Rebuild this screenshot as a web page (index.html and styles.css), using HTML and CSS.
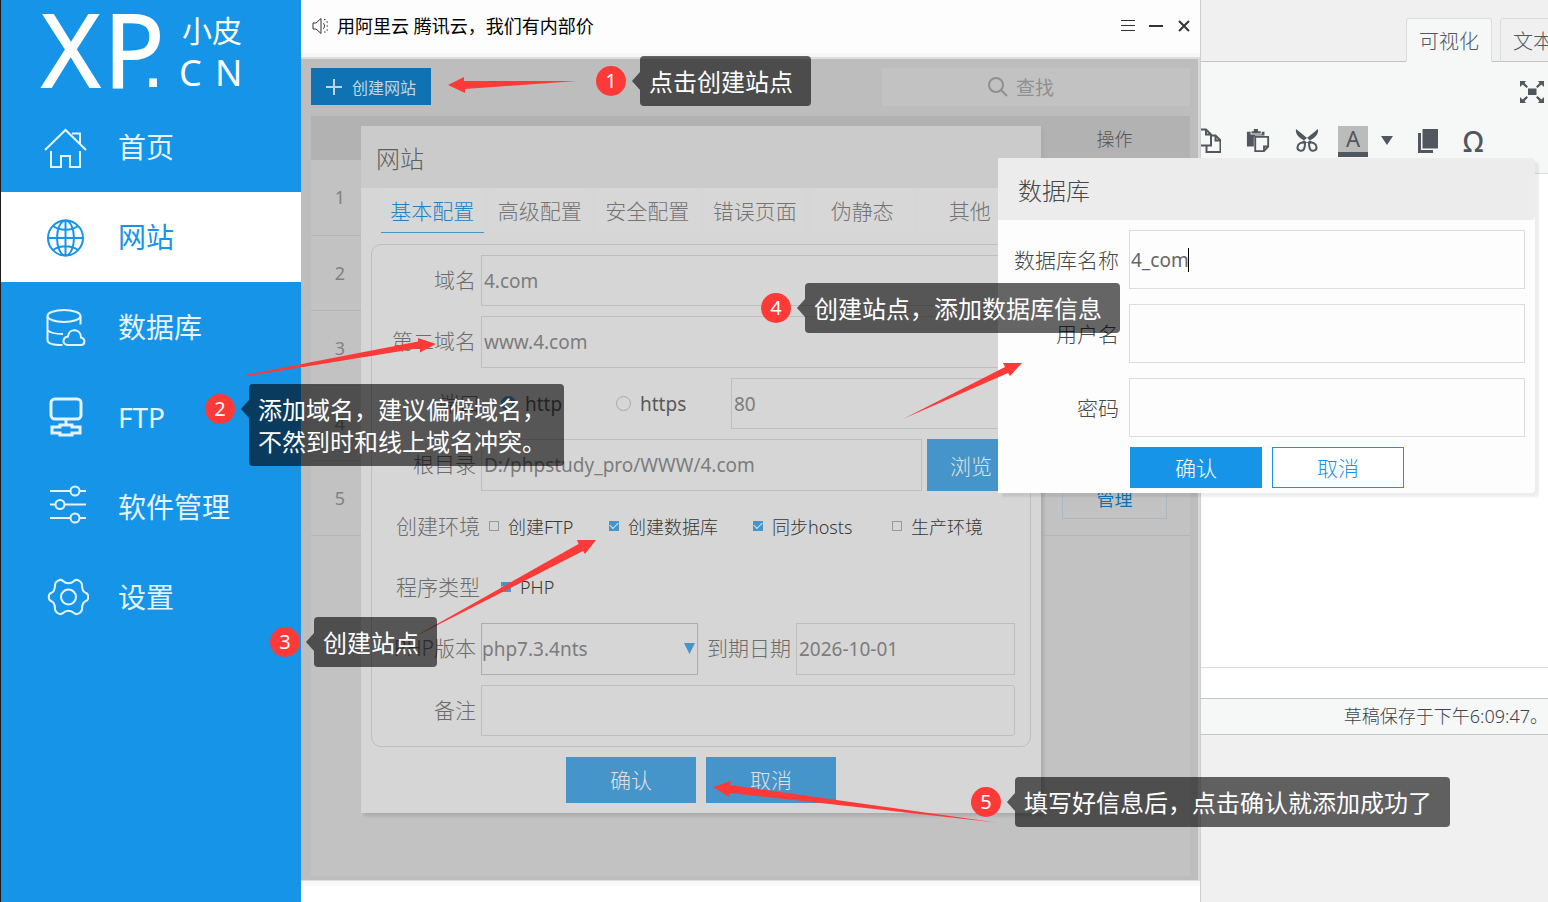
FILE: index.html
```html
<!DOCTYPE html>
<html lang="zh-CN">
<head>
<meta charset="utf-8">
<title>小皮 - 创建网站</title>
<link rel="stylesheet" href="styles.css">
</head>
<body>
<div class="desktop">
  <aside class="sidebar">
    <svg class="logo" viewBox="0 0 300 102" role="img" aria-label="XP.CN 小皮">
      <text class="logo-big" x="41 103" y="87">XP<tspan class="logo-dot" x="141" y="87">.</tspan></text>
      <text class="logo-cn" x="181" y="42">小皮</text>
      <text class="logo-en" x="178 214" y="86">CN</text>
    </svg>
    <nav class="nav">
      <a class="nav-item" href="#home">
        <svg class="nav-icon" viewBox="0 0 46 46"><path d="M2 26 22.500 6 43 26M8 27v16h10V32h9v11h10V27M29 9.500h8v10"/></svg>
        <span>首页</span>
      </a>
      <a class="nav-item active" href="#site">
        <svg class="nav-icon" viewBox="0 0 46 46"><circle cx="22.500" cy="24" r="17.500"/><ellipse cx="22.500" cy="24" rx="8.500" ry="17.500"/><path d="M22.500 6.500v35M5 24h35M10 12c7 5 18 5 25 0M10 36c7-5 18-5 25 0"/></svg>
        <span>网站</span>
      </a>
      <a class="nav-item" href="#db">
        <svg class="nav-icon" viewBox="0 0 46 46"><ellipse cx="21" cy="12" rx="16.500" ry="6"/><path d="M37.500 12v8.500M4.500 12v24c0 3 5 5 15 5M4.500 26c2 2.500 7 4 15.500 4M25 41h13c4 0 5-6 0-7.500 0-9-12-10-13-1-6 1-6 8 0 8.500z"/></svg>
        <span>数据库</span>
      </a>
      <a class="nav-item" href="#ftp">
        <svg class="nav-icon thick" viewBox="0 0 46 46"><rect x="8" y="5" width="30" height="20" rx="4"/><path d="M23 25v6M17 31h12v2h8v6h-8v2H17v-2H9v-6h8z"/></svg>
        <span>FTP</span>
      </a>
      <a class="nav-item" href="#soft">
        <svg class="nav-icon" viewBox="0 0 46 46"><path d="M7 7h20.500M36.500 7H43M7 20.500h5.500M21.500 20.500H43M7 34h20.500M36.500 34H43"/><circle cx="32" cy="7" r="4.500"/><circle cx="17" cy="20.500" r="4.500"/><circle cx="32" cy="34" r="4.500"/></svg>
        <span>软件管理</span>
      </a>
      <a class="nav-item" href="#settings">
        <svg class="nav-icon" viewBox="0 0 46 46"><path d="M20 7c3 3 8 3 11 0 3-3 8 1 8 4 0 5 1 7 4 8 3 1 3 7 0 8-3 1-4 4-4 8 0 3-5 7-8 4-3-3-8-3-11 0-3 3-8-1-8-4 0-4-1-7-4-8-3-1-3-7 0-8 3-1 4-3 4-8 0-3 5-7 8-4z"/><circle cx="25.500" cy="23" r="7.500"/></svg>
        <span>设置</span>
      </a>
    </nav>
  </aside>

  <main class="app">
    <header class="titlebar">
      <svg class="speaker" viewBox="0 0 18 18"><path d="M2 6h3l5-4.500v15L5 12H2zM12 6c2 1.500 2 4.500 0 6"/><path class="dots" d="M13 2.500h1.500M15.500 5h1.500M15.500 9h1.500M15.500 13h1.500M13 15h1.500"/></svg>
      <span class="notice">用阿里云 腾讯云，我们有内部价</span>
      <button class="win-btn" aria-label="菜单"><svg viewBox="0 0 16 16"><path d="M1 2.500h14M1 7.500h14M1 12.500h14"/></svg></button>
      <button class="win-btn heavy" aria-label="最小化"><svg viewBox="0 0 16 16"><path d="M1 8h14"/></svg></button>
      <button class="win-btn heavy" aria-label="关闭"><svg viewBox="0 0 16 16"><path d="M3 3l10 10M13 3 3 13"/></svg></button>
    </header>
    <section class="panel">
      <div class="tools">
        <button class="create"><svg viewBox="0 0 16 16"><path d="M8 0v16M0 8h16"/></svg>创建网站</button>
        <button class="search"><svg viewBox="0 0 20 20"><circle cx="8" cy="8" r="7"/><path d="M13 13l6 6"/></svg>查找</button>
      </div>
      <div class="list">
        <table class="sites">
          <thead><tr><th class="col-id"></th><th></th><th class="col-op">操作</th></tr></thead>
          <tbody>
            <tr><td>1</td><td></td><td><button class="manage">管理</button></td></tr>
            <tr><td>2</td><td></td><td><button class="manage">管理</button></td></tr>
            <tr><td>3</td><td></td><td><button class="manage">管理</button></td></tr>
            <tr><td>4</td><td></td><td><button class="manage">管理</button></td></tr>
            <tr><td>5</td><td></td><td><button class="manage">管理</button></td></tr>
          </tbody>
        </table>
      </div>
    </section>
    <footer class="app-foot"></footer>
  </main>

  <section class="editor">
    <div class="ed-tabs">
      <button class="ed-tab on">可视化</button>
      <button class="ed-tab">文本</button>
    </div>
    <div class="ed-tools">
      <div class="ed-row end">
        <button class="ed-btn" aria-label="全屏"><svg class="i24" viewBox="0 0 24 22"><path class="fill" d="M8 7.500h8.500v6.500H8zM0 0h6L4.500 2 8 5.500 6.500 7 2.500 3.500 0 6zM24 0h-6l1.500 2L16 5.500 17.500 7l4-3.500L24 6zM0 22h6l-1.500-2L8 16.500 6.500 15l-4 3.500L0 16zM24 22h-6l1.500-2-3.500-3.500 1.500-1.500 4 3.500L24 16z"/></svg></button>
      </div>
      <div class="ed-row">
        <button class="ed-btn" aria-label="复制"><svg class="i20" viewBox="0 0 20 26"><path d="M0 1.500h5l5 5v2M10 17.500H0M5 1.500v5h5M5.500 17.500V24H19.500V12.500l-5-5H10v10H5.500M14.500 7.500v5h5"/></svg></button>
        <button class="ed-btn" aria-label="粘贴"><svg class="i24" viewBox="0 0 24 26"><path class="fill" d="M0 3h4v3h12V3h3v4H9L7.500 9v10H0zM5 2.500h2.500V0h4.500v2.500H15V5H5z"/><path d="M9 8.500h14V19L18.500 24H9zM23 19h-4.500v5"/></svg></button>
        <button class="ed-btn" aria-label="剪切"><svg class="i24" viewBox="0 0 24 24"><path class="fill" d="M1 0c-1 5 3 9 9 12l4 3 3-2zM23 0c1 5-3 9-9 12l-4 3-3-2z"/><path d="M10 14c-3-1-7 0-7.500 4s5 5 6.500 2c1-2 1-4 1-6zM14 14c3-1 7 0 7.500 4s-5 5-6.500 2c-1-2-1-4-1-6z"/></svg></button>
        <button class="ed-color" aria-label="文字颜色">A</button>
        <button class="ed-btn" aria-label="更多颜色"><svg class="i12" viewBox="0 0 12 10"><path class="fill" d="M0 0h12L6 9z"/></svg></button>
        <button class="ed-btn" aria-label="页面"><svg class="i20" viewBox="0 0 20 24"><path class="fill" d="M4.500 0H20v19.500H4.500zM0 4h3v17h12v3H0z"/></svg></button>
        <button class="ed-btn omega" aria-label="特殊字符">Ω</button>
      </div>
    </div>
    <div class="ed-body"></div>
    <div class="ed-path"></div>
    <div class="ed-status">草稿保存于下午6:09:47。</div>
    <div class="ed-rest"></div>
  </section>

  <form class="dialog site-dialog">
    <h2 class="dlg-head">网站</h2>
    <div class="tabs">
      <button type="button" class="tab on">基本配置</button>
      <button type="button" class="tab">高级配置</button>
      <button type="button" class="tab">安全配置</button>
      <button type="button" class="tab">错误页面</button>
      <button type="button" class="tab">伪静态</button>
      <button type="button" class="tab">其他</button>
    </div>
    <div class="fields">
      <div class="row"><label class="lab" for="domain">域名</label><input class="box" id="domain" value="4.com"></div>
      <div class="row tall"><label class="lab" for="domain2">第二域名</label><input class="box" id="domain2" value="www.4.com"></div>
      <div class="row"><label class="lab wide" for="port">端口</label>
        <label class="radio first"><input type="radio" name="proto" checked>http</label>
        <label class="radio"><input type="radio" name="proto">https</label>
        <input class="box" id="port" value="80"></div>
      <div class="row tall"><label class="lab" for="root">根目录</label><input class="box" id="root" value="D:/phpstudy_pro/WWW/4.com"><button type="button" class="browse">浏览</button></div>
      <div class="row"><span class="lab wide">创建环境</span>
        <div class="checks">
          <label class="check"><input type="checkbox"><span>创建FTP</span></label>
          <label class="check"><input type="checkbox" checked><span>创建数据库</span></label>
          <label class="check"><input type="checkbox" checked><span>同步hosts</span></label>
          <label class="check"><input type="checkbox"><span>生产环境</span></label>
        </div></div>
      <div class="row"><span class="lab wide">程序类型</span>
        <div class="checks type"><label class="check"><input type="checkbox" checked><span>PHP</span></label></div></div>
      <div class="row tall"><label class="lab" for="ver">PHP版本</label>
        <span class="select"><select class="box" id="ver"><option>php7.3.4nts</option></select><svg viewBox="0 0 11 11"><path d="M0 0h11L5.500 11z"/></svg></span>
        <label class="lab2" for="exp">到期日期</label><input class="box" id="exp" value="2026-10-01"></div>
      <div class="row"><label class="lab" for="note">备注</label><input class="box round" id="note"></div>
    </div>
    <div class="actions">
      <button type="button" class="dim-btn">确认</button>
      <button type="button" class="dim-btn">取消</button>
    </div>
  </form>

  <form class="dialog db-dialog">
    <h2 class="dlg-head">数据库</h2>
    <div class="db-fields">
      <label for="dbname">数据库名称</label>
      <div class="typing"><input id="dbname" value="4_com"><i class="caret"></i></div>
      <label for="dbuser">用户名</label><input id="dbuser">
      <label for="dbpass">密码</label><input id="dbpass" type="password">
    </div>
    <div class="db-actions">
      <button type="button" class="primary">确认</button>
      <button type="button" class="outline">取消</button>
    </div>
  </form>

  <svg class="arrows" viewBox="0 0 1548 902" aria-hidden="true">
    <path d="M448 85 464 77V81L577 81 465 89V93z"/>
    <path d="M245 375 418 341.500V338L436 344 420 352.500V348L245 376.500z"/>
    <path d="M414 637 578.500 544 577 540H596L585 554 583 551z"/>
    <path d="M903 419 1005 367 1003 363H1022L1010 376 1008 373z"/>
    <path d="M713 787 731 781 730 785 996 822.500 729.500 793 729 797z"/>
  </svg>
  <div class="callout c1"><b class="num">1</b><p class="tip">点击创建站点</p></div>
  <div class="callout c2"><b class="num">2</b><p class="tip">添加域名，建议偏僻域名，<br>不然到时和线上域名冲突。</p></div>
  <div class="callout c3"><b class="num">3</b><p class="tip">创建站点</p></div>
  <div class="callout c4"><b class="num">4</b><p class="tip">创建站点，添加数据库信息</p></div>
  <div class="callout c5"><b class="num">5</b><p class="tip">填写好信息后，点击确认就添加成功了</p></div>
</div>
</body>
</html>
```
FILE: styles.css
```css
* { box-sizing: border-box; }
body {
  margin: 0;
  font-family: "Noto Sans", "Noto Sans CJK SC", sans-serif;
  font-weight: 300;
  background: #fff;
}
button, input, select { font: inherit; color: inherit; margin: 0; padding: 0; border: 0; border-radius: 0; background: none; outline: 0; }
h2, p { margin: 0; font-weight: inherit; }
svg { display: block; flex: none; fill: none; stroke: currentColor; }

.desktop { position: relative; display: flex; min-height: 100vh; overflow: hidden; }

/* Sidebar */
.sidebar { flex: none; width: 301px; background: #1694e8; border-left: 1px solid #1c1c1c; color: #fff; }
.logo { width: 300px; height: 102px; }
.logo text { fill: #fff; stroke: none; }
.logo .logo-big { font-family: "Open Sans", "Noto Sans", sans-serif; font-size: 100px; font-weight: 400; stroke: #fff; stroke-width: 2px; }
.logo-dot { font-family: "Liberation Sans", sans-serif; font-size: 80px; stroke: none; }
.logo-cn { font-size: 30px; font-weight: 400; }
.logo-en { font-size: 36px; font-weight: 400; }
.nav-item { display: flex; align-items: center; gap: 29px; height: 90px; padding-left: 42px; color: #e6f3fd; font-size: 28px; font-weight: 400; line-height: 40px; text-decoration: none; }
.nav-item.active { background: #fff; color: #1694e8; }
.nav-icon { width: 46px; height: 46px; stroke-width: 2; }
.nav-icon.thick { stroke-width: 3; }

/* Application window */
.app { flex: none; width: 900px; display: flex; flex-direction: column; background: #d9d9d9; border-right: 1px solid #cfcfcf; }
.titlebar { display: flex; align-items: center; gap: 12px; height: 59px; padding: 0 8px 5px 10px; background: #fdfdfd; border-bottom: 2px solid #dedede; box-shadow: inset 0 -4px #f7f7f7; color: #333; }
.speaker { width: 18px; height: 18px; }
.notice { flex: 1; margin-left: -4px; font-size: 18px; line-height: 26px; color: #000; font-weight: 400; }
.win-btn svg { width: 16px; height: 16px; }
.win-btn.heavy svg { stroke-width: 2; }
.panel { flex: 1; display: flex; flex-direction: column; gap: 10px; margin-right: 2px; padding: 9px 8px 4px 10px; background: #bdbdbd; color: #818181; }
.tools { display: flex; justify-content: space-between; }
.create { display: flex; align-items: center; gap: 10px; width: 120px; height: 37px; padding-left: 15px; background: #0f72b2; color: #c5d4df; font-size: 16px; font-weight: 400; }
.create svg { width: 16px; height: 16px; stroke-width: 2; }
.search { display: flex; align-items: center; justify-content: center; gap: 8px; width: 308px; height: 38px; padding-right: 30px; background: #c2c2c2; color: #8f8f8f; font-size: 19px; font-weight: 400; }
.search svg { width: 20px; height: 20px; stroke-width: 2; }
.list { flex: 1; background: #c2c2c2; }
.sites { width: 100%; border-collapse: collapse; table-layout: fixed; font-size: 18px; text-align: center; }
.sites th { height: 44px; padding: 0; background: #b2b2b2; color: #555; font-weight: 300; }
.sites td { height: 75px; padding: 0; border-bottom: 1px solid #b6b6b6; font-weight: 400; }
.col-id { width: 58px; }
.col-op { width: 151px; }
.manage { width: 105px; height: 42px; border: 1px solid #a9b8c2; color: #0f72b2; }
.app-foot { height: 22px; border-top: 1px solid #ddd; background: #fff; box-shadow: inset 0 5px #f8f8f8; }

/* Post editor behind the window */
.editor { flex: 1; min-width: 0; display: flex; flex-direction: column; overflow: hidden; background: #f0f0f0; color: #50575e; }
.ed-tabs { display: flex; align-items: flex-end; gap: 8px; height: 62px; padding-left: 205px; border-bottom: 1px solid #c3c4c7; }
.ed-tab { flex: none; height: 44px; margin-bottom: -1px; padding: 0 12px; border: 1px solid #dcdcde; border-bottom-color: #c3c4c7; border-radius: 3px 3px 0 0; font-size: 20px; }
.ed-tab.on { background: #f6f8f8; border-bottom-color: #f6f8f8; }
.ed-tools { height: 112px; padding-top: 8px; background: #f6f8f8; border-bottom: 1px solid #dcdcde; }
.ed-row { display: flex; align-items: center; gap: 25px; height: 54px; }
.ed-row.end { justify-content: flex-end; height: 44px; padding-right: 4px; }
.ed-btn svg { stroke-width: 2; }
.ed-btn .fill { fill: currentColor; stroke: none; }
.i24 { width: 24px; height: 24px; }
.i20 { width: 20px; height: 26px; }
.i12 { width: 12px; height: 10px; }
.ed-color { width: 30px; height: 31px; margin-left: -6px; margin-right: -12px; background: #bbb; border-bottom: 5px solid #50575e; font-size: 22px; line-height: 25px; font-weight: 400; }
.ed-btn.omega { font-size: 28px; line-height: 30px; font-weight: 500; }
.ed-body { flex: 1; background: #fff; }
.ed-path { height: 31px; border-top: 1px solid #dcdcde; background: #fff; }
.ed-status { height: 37px; border: solid #c3c4c7; border-width: 1px 0; background: #f6f8f8; font-size: 18px; line-height: 35px; text-align: right; white-space: nowrap; color: #3c434a; }
.ed-rest { height: 167px; }

/* Dialogs */
.dialog { position: absolute; }
.dlg-head { height: 62px; font-size: 24px; line-height: 66px; }
.site-dialog { left: 361px; top: 126px; width: 680px; background: #d6d6d6; box-shadow: 3px 3px 3px #acacac; color: #6c6c6c; font-size: 21px; }
.site-dialog .dlg-head { padding-left: 15px; background: #cbcbcb; color: #606060; }
.tabs { display: flex; gap: 5px; padding: 0 20px; }
.tab { flex: 1; height: 45px; background: #d7d7d7; border-bottom: 1px solid transparent; color: #747474; }
.tab.on { color: #2082c4; border-color: #4594ca; }
.fields { display: flex; flex-direction: column; gap: 10px; margin: 11px 10px 10px; padding: 10px 15px 10px 10px; border: 1px solid #bebebe; border-radius: 10px; }
.row { display: flex; align-items: center; gap: 5px; min-height: 51px; }
.row.tall { min-height: 52px; }
.lab, .lab2 { line-height: 28px; padding-bottom: 2px; }
.lab { flex: none; width: 94px; text-align: right; white-space: nowrap; }
.lab.wide { width: 98px; margin-right: 1px; }
.box { flex: 1; min-width: 0; width: 100%; height: 51px; padding-left: 2px; border: 1px solid #bebebe; font-size: 19px; font-weight: 400; color: #7c7c7c; }
.row.tall .box { height: 52px; }
.box.round { border-radius: 0 3px 3px 0; }
.radio { display: flex; align-items: center; gap: 9px; width: 110px; color: #5a5a5a; font-size: 19px; font-weight: 400; }
.radio.first { width: 125px; padding-left: 15px; }
.radio input { appearance: none; width: 15px; height: 15px; border: 1px solid #a8a8a8; border-radius: 50%; }
.radio input:checked { border: 4px solid #4594ca; }
.browse { width: 88px; height: 52px; background: #4594ca; color: #e0e0e0; }
.checks { display: grid; grid-template-columns: 120px 144px 139px auto; padding: 0 0 2px 3px; }
.checks.type { padding-left: 15px; }
.check { display: flex; align-items: center; gap: 9px; color: #363636; font-size: 18px; white-space: nowrap; }
.check input { appearance: none; display: grid; place-items: center; width: 10px; height: 10px; border: 1px solid #999; }
.check input:checked { background: #4594ca; border-color: #4594ca; }
.check input:checked::before { content: ""; width: 7px; height: 4px; margin-bottom: 2px; border: solid #e6e6e6; border-width: 0 0 1px 1px; transform: rotate(-45deg); }
.select { position: relative; width: 217px; }
.select .box { appearance: none; display: block; padding-left: 0; border-color: #adadad; }
.select svg { position: absolute; right: 3px; top: 20px; width: 11px; height: 11px; fill: #4594ca; stroke: none; pointer-events: none; }
.lab2 { padding-left: 4px; }
.actions { display: flex; justify-content: center; gap: 10px; padding-bottom: 10px; }
.dim-btn { width: 130px; height: 46px; padding-bottom: 2px; background: #4594ca; color: #e0e0e0; }

.db-dialog { left: 998px; top: 158px; width: 537px; background: #fdfdfd; border-radius: 0 4px 4px 0; box-shadow: 4px 4px 2px rgba(0, 0, 0, .07); color: #484848; font-size: 21px; }
.db-dialog .dlg-head { padding-left: 20px; background: #ececec; border-radius: 0 4px 4px 0; }
.db-fields { display: grid; grid-template-columns: auto 1fr; align-items: center; gap: 15px 10px; padding: 10px 10px 10px 16px; }
.db-fields label { padding-bottom: 2px; text-align: right; }
.db-fields input { display: block; width: 100%; height: 59px; padding-left: 1px; border: 1px solid #dcdcdc; font-size: 19px; font-weight: 400; color: #666; }
.typing { position: relative; }
.caret { position: absolute; left: 59px; top: 18px; width: 1px; height: 24px; background: #000; }
.db-actions { display: flex; gap: 10px; padding: 0 0 5px 132px; }
.db-actions button { width: 132px; height: 41px; padding-bottom: 2px; }
.primary { background: #1694e8; color: #fff; }
.db-actions .outline { border: 1px solid #1694e8; background: #fff; color: #1694e8; }

/* Tutorial annotations */
.arrows { position: absolute; left: 0; top: 0; width: 1548px; height: 902px; fill: #fd3a38; stroke: none; pointer-events: none; }
.callout { position: absolute; display: flex; align-items: flex-start; gap: 14px; color: #fff; white-space: nowrap; }
.num { width: 30px; height: 30px; margin-top: 10px; border-radius: 50%; background: #fd3a38; font-size: 20px; font-weight: 400; line-height: 29px; text-align: center; }
.tip { position: relative; padding: 10px 18px 8px 9px; border-radius: 4px; background: rgba(0, 0, 0, .6); font-size: 24px; font-weight: 400; line-height: 32px; }
.tip::before { content: ""; position: absolute; right: 100%; top: 16px; border: solid transparent; border-width: 9px 8px 9px 0; border-right-color: rgba(0, 0, 0, .6); }
.c1 { left: 596px; top: 56px; }
.c2 { left: 205px; top: 384px; }
.c3 { left: 270px; top: 617px; }
.c4 { left: 761px; top: 283px; }
.c5 { left: 971px; top: 777px; }
```
